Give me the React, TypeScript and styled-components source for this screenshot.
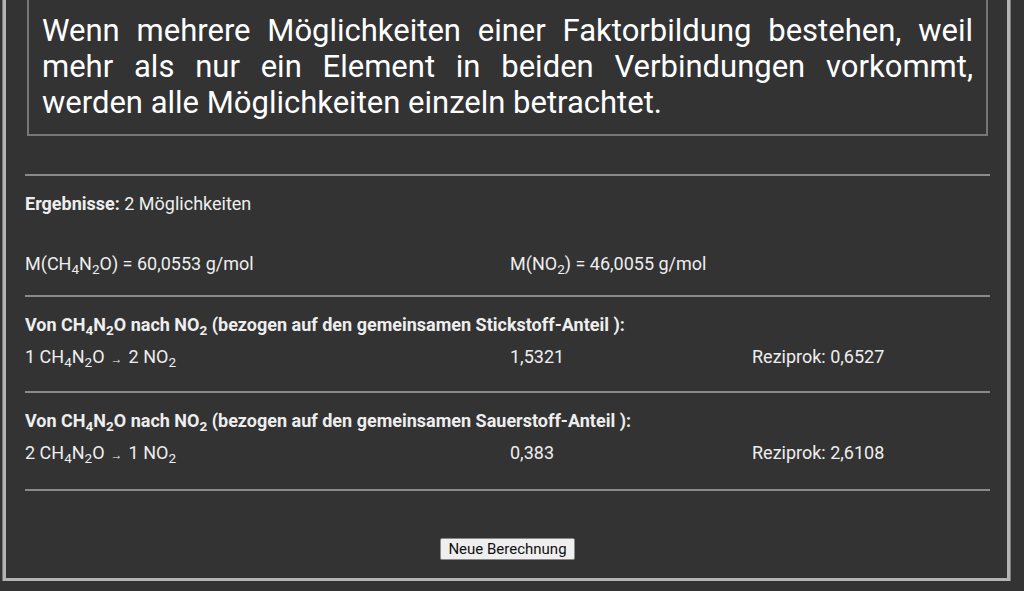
import React from "react";
import styled, { createGlobalStyle } from "styled-components";

const GlobalStyle = createGlobalStyle`
  html, body {
    margin: 0;
    padding: 0;
    background: #333333;
    font-family: Roboto, "Liberation Sans", Arial, sans-serif;
    color: #eeeeee;
  }
`;

const Page = styled.div`
  width: 1007px;
  padding-left: 3px;
  margin-top: -9px;
`;

const Panel = styled.div`
  border: 3px solid #b4b4b4;
  border-top: none;
  box-shadow: 0 0 0 1px #7a7a7a;
  padding: 0 17px 18px 19px;
`;

const Hint = styled.div`
  margin: 0 2px;
  border: 2px solid #777777;
  border-top: none;
  padding: 22px 13px 13px 13px;
  font-size: 31px;
  line-height: 36px;
  color: #ffffff;
  text-align: justify;
`;

const Rule = styled.hr<{ $top: number }>`
  border: none;
  height: 2px;
  background: #8a8a8a;
  margin: ${(p) => p.$top}px 0 0 0;
`;

const Line = styled.div<{ $top: number }>`
  margin-top: ${(p) => p.$top}px;
  font-size: 18px;
  line-height: 20px;
`;

const Row = styled.div<{ $top: number }>`
  display: grid;
  grid-template-columns: 485px 242px 1fr;
  margin-top: ${(p) => p.$top}px;
  font-size: 18px;
  line-height: 20px;
`;

const Strong = styled.b`
  font-weight: 700;
`;

const Sub = styled.sub`
  font-size: 13.5px;
  line-height: 0;
  vertical-align: -4px;
`;

const Arrow = styled.span`
  font-size: 12px;
  margin: 0 6px;
`;

const Footer = styled.div`
  display: flex;
  justify-content: center;
  margin-top: 47px;
`;

const Button = styled.button`
  font-family: Roboto, "Liberation Sans", Arial, sans-serif;
  font-size: 15px;
  line-height: 20px;
  color: #111111;
  background: #efefef;
  border: 1px solid #8a8a8a;
  border-radius: 2px;
  padding: 0 7px;
`;

type Part = string | [string];

const Formula = ({ parts }: { parts: Part[] }) => (
  <>
    {parts.map((p, i) =>
      typeof p === "string" ? <React.Fragment key={i}>{p}</React.Fragment> : <Sub key={i}>{p[0]}</Sub>
    )}
  </>
);

const urea: Part[] = ["CH", ["4"], "N", ["2"], "O"];
const no2: Part[] = ["NO", ["2"]];

type Result = {
  element: string;
  left: number;
  right: number;
  factor: string;
  reciprocal: string;
};

const results: Result[] = [
  { element: "Stickstoff", left: 1, right: 2, factor: "1,5321", reciprocal: "0,6527" },
  { element: "Sauerstoff", left: 2, right: 1, factor: "0,383", reciprocal: "2,6108" },
];

export default function App() {
  return (
    <>
      <GlobalStyle />
      <Page>
        <Panel>
          <Hint>
            Wenn mehrere Möglichkeiten einer Faktorbildung bestehen, weil mehr als nur ein Element in
            beiden Verbindungen vorkommt, werden alle Möglichkeiten einzeln betrachtet.
          </Hint>
          <Rule $top={38} />
          <Line $top={18}>
            <Strong>Ergebnisse:</Strong> 2 Möglichkeiten
          </Line>
          <Row $top={40}>
            <span>
              M(<Formula parts={urea} />) = 60,0553 g/mol
            </span>
            <span>
              M(<Formula parts={no2} />) = 46,0055 g/mol
            </span>
            <span />
          </Row>
          <Rule $top={21} />
          {results.map((r, i) => (
            <React.Fragment key={r.element}>
              <Line $top={18}>
                <Strong>
                  Von <Formula parts={urea} /> nach <Formula parts={no2} /> (bezogen auf den gemeinsamen{" "}
                  {r.element}-Anteil ):
                </Strong>
              </Line>
              <Row $top={12}>
                <span>
                  {r.left} <Formula parts={urea} />
                  <Arrow>→</Arrow>
                  {r.right} <Formula parts={no2} />
                </span>
                <span>{r.factor}</span>
                <span>Reziprok: {r.reciprocal}</span>
              </Row>
              <Rule $top={i === results.length - 1 ? 24 : 22} />
            </React.Fragment>
          ))}
          <Footer>
            <Button>Neue Berechnung</Button>
          </Footer>
        </Panel>
      </Page>
    </>
  );
}
